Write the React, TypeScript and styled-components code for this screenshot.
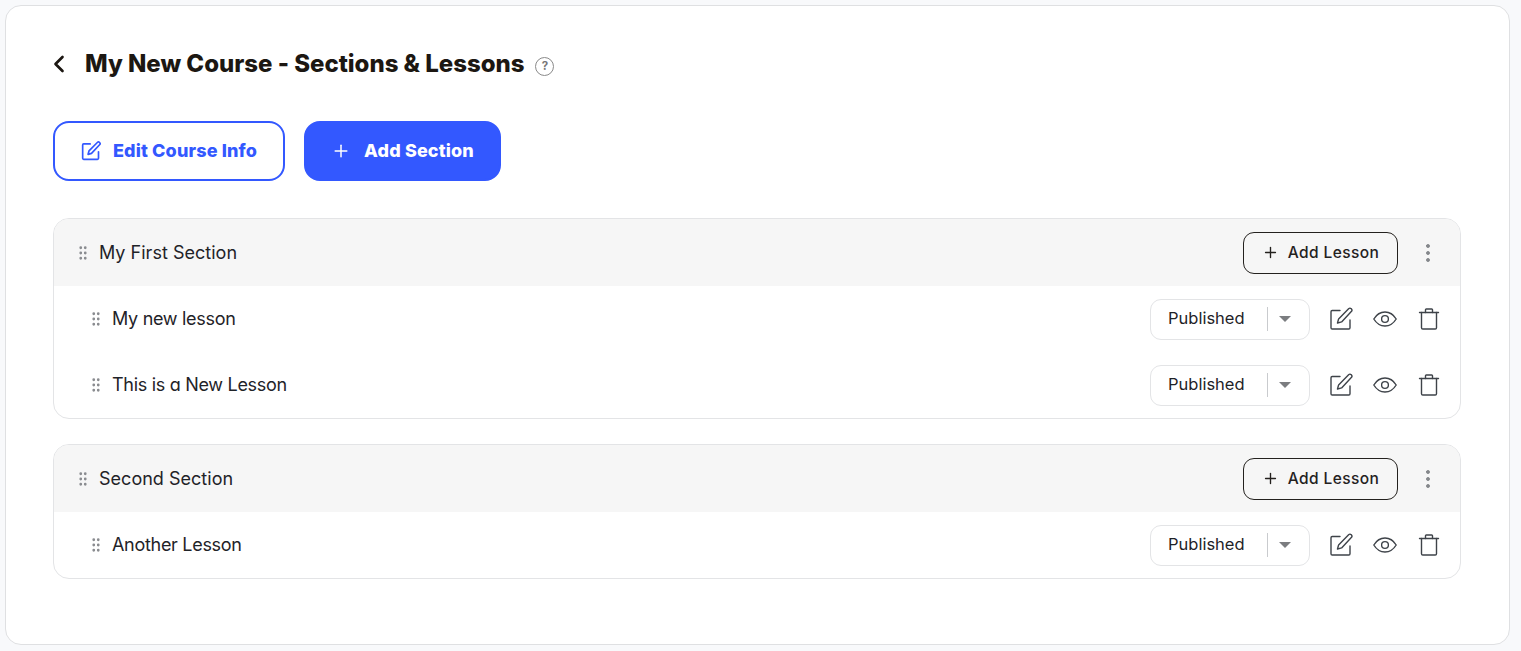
import styled, { createGlobalStyle } from "styled-components";
import { ChevronLeft, Plus, GripVertical } from "lucide-react";

const GlobalStyle = createGlobalStyle`
  html, body { margin: 0; padding: 0; background: #f8f9fb; }
  body {
    font-family: Inter, "Noto Sans", sans-serif;
    font-feature-settings: "cv11";
    color: #1f2328;
  }
`;

const Page = styled.div`
  padding: 5px 11px 6px 5px;
  height: 651px;
  box-sizing: border-box;
`;
const Panel = styled.main`
  box-sizing: border-box;
  height: 640px;
  background: #fff;
  border: 1px solid #dfe0e2;
  border-radius: 16px;
  padding: 41px 48px 0 47px;
`;
const TitleRow = styled.header`
  display: flex;
  align-items: center;
  height: 34px;
  color: #1c1712;
`;
const BackIcon = styled(ChevronLeft)`
  width: 28px;
  height: 28px;
  margin-left: -8px;
  margin-right: 12px;
  stroke-width: 2.3;
`;
const Title = styled.h1`
  margin: 0;
  font-size: 24px;
  line-height: 34px;
  font-weight: 800;
  letter-spacing: -0.02px;
`;
const Help = styled.span`
  box-sizing: border-box;
  width: 19px;
  height: 19px;
  margin: 4px 0 0 11px;
  border: 1px solid #8a8a8a;
  border-radius: 50%;
  font-size: 11.5px;
  font-weight: 700;
  color: #777;
  display: flex;
  align-items: center;
  justify-content: center;
`;
const Actions = styled.div`
  display: flex;
  gap: 19px;
  margin-top: 40px;
`;
const MainButton = styled.button<{ $filled?: boolean; $width: number }>`
  box-sizing: border-box;
  width: ${(p) => p.$width}px;
  height: 60px;
  display: flex;
  align-items: center;
  justify-content: center;
  gap: ${(p) => (p.$filled ? 13 : 12)}px;
  border: 2px solid #3358ff;
  border-radius: 16px;
  background: ${(p) => (p.$filled ? "#3358ff" : "#fff")};
  color: ${(p) => (p.$filled ? "#fff" : "#3358ff")};
  font: 800 18px Inter, sans-serif;
  font-feature-settings: "cv11";
  letter-spacing: 0.15px;
  padding: 0 0 2px;
`;
const Section = styled.section`
  margin-top: 25px;
  border: 1px solid #e3e4e6;
  border-radius: 16px;
  overflow: hidden;
  &:first-of-type { margin-top: 37px; }
`;
const SectionHead = styled.div`
  height: 67px;
  background: #f6f6f6;
  display: flex;
  align-items: center;
  padding: 0 22px 0 20px;
`;
const Grip = styled(GripVertical)`
  width: 18px;
  height: 18px;
  color: #8a8c90;
  stroke-width: 1.7;
  flex: none;
`;
const SectionName = styled.span`
  margin-left: 7px;
  font-size: 18px;
  letter-spacing: 0.02px;
`;
const AddLesson = styled.button`
  box-sizing: border-box;
  margin-left: auto;
  width: 155px;
  height: 42px;
  display: flex;
  align-items: center;
  justify-content: center;
  gap: 9px;
  background: transparent;
  border: 1px solid #24211e;
  border-radius: 11px;
  color: #24211e;
  font: 500 15.5px Inter, sans-serif;
  font-feature-settings: "cv11";
  letter-spacing: 0.42px;
  padding: 0;
`;
const MoreIcon = styled.svg`
  width: 20px;
  height: 20px;
  margin-left: 20px;
  fill: none;
  stroke: #4a4e54;
  stroke-width: 1.1;
  flex: none;
`;
const LessonRow = styled.div`
  height: 66px;
  display: flex;
  align-items: center;
  padding: 0 19px 0 33px;
`;
const LessonName = styled.span`
  margin: 0 0 1px 7px;
  font-size: 18px;
  letter-spacing: -0.3px;
`;
const Status = styled.div`
  box-sizing: border-box;
  margin-left: auto;
  width: 160px;
  height: 41px;
  border: 1px solid #e3e4e6;
  border-radius: 11px;
  display: flex;
  align-items: center;
  padding-left: 17px;
  font-size: 16.5px;
`;
const StatusText = styled.span`
  width: 99px;
  margin-bottom: 2px;
`;
const StatusDivider = styled.span`
  width: 1px;
  height: 24px;
  background: #c9cbce;
`;
const Caret = styled.span`
  margin-left: 11px;
  width: 0;
  height: 0;
  border-left: 6px solid transparent;
  border-right: 6px solid transparent;
  border-top: 6px solid #7b7d80;
`;
const Tools = styled.div`
  display: flex;
  align-items: center;
  gap: 20px;
  margin-left: 19px;
  color: #3e4349;
`;
const ToolIcon = styled.svg`
  width: 24px;
  height: 24px;
  fill: none;
  stroke: currentColor;
  stroke-width: 1.4;
  stroke-linecap: round;
  stroke-linejoin: round;
  flex: none;
`;

function TrashIcon() {
  return (
    <ToolIcon viewBox="0 0 24 24">
      <path d="M2.5 5.5h19" />
      <path d="M8.5 5.5V2.8a.8.8 0 0 1 .8-.8h5.4a.8.8 0 0 1 .8.8v2.7" />
      <path d="M4.5 5.5v15.2a1.3 1.3 0 0 0 1.3 1.3h12.4a1.3 1.3 0 0 0 1.3-1.3V5.5" />
    </ToolIcon>
  );
}

function EditIcon({ className }: { className?: string }) {
  return (
    <ToolIcon viewBox="0 0 24 24" className={className}>
      <path d="M11 3.5H3.2A1.2 1.2 0 0 0 2 4.7v16.1A1.2 1.2 0 0 0 3.2 22h16.6a1.2 1.2 0 0 0 1.2-1.2V13" />
      <path d="M19.6 1.8a1.9 1.9 0 0 1 2.7 2.7L12.6 14.9 8.5 16l1.1-4.1z" />
    </ToolIcon>
  );
}

const ButtonEdit = styled(EditIcon)`
  width: 20px;
  height: 20px;
  stroke-width: 2;
  margin-top: 2px;
`;

function EyeIcon() {
  return (
    <ToolIcon viewBox="0 0 24 24">
      <path d="M0.8 12C3.5 7.6 7.4 5 12 5s8.5 2.6 11.2 7c-2.7 4.4-6.6 7-11.2 7S3.5 16.4.8 12z" />
      <circle cx="12" cy="12" r="3.4" />
    </ToolIcon>
  );
}

const ButtonPlus = styled(Plus)`
  margin-top: 2px;
`;

function Lesson({ name }: { name: string }) {
  return (
    <LessonRow>
      <Grip />
      <LessonName>{name}</LessonName>
      <Status>
        <StatusText>Published</StatusText>
        <StatusDivider />
        <Caret />
      </Status>
      <Tools>
        <EditIcon />
        <EyeIcon />
        <TrashIcon />
      </Tools>
    </LessonRow>
  );
}

const sections = [
  { name: "My First Section", lessons: ["My new lesson", "This is a New Lesson"] },
  { name: "Second Section", lessons: ["Another Lesson"] },
];

export default function App() {
  return (
    <Page>
      <GlobalStyle />
      <Panel>
        <TitleRow>
          <BackIcon />
          <Title>My New Course - Sections &amp; Lessons</Title>
          <Help>?</Help>
        </TitleRow>
        <Actions>
          <MainButton $width={232}>
            <ButtonEdit />
            Edit Course Info
          </MainButton>
          <MainButton $filled $width={197}>
            <ButtonPlus size={20} strokeWidth={1.8} />
            Add Section
          </MainButton>
        </Actions>
        {sections.map((s) => (
          <Section key={s.name}>
            <SectionHead>
              <Grip />
              <SectionName>{s.name}</SectionName>
              <AddLesson>
                <Plus size={17} strokeWidth={1.9} />
                Add Lesson
              </AddLesson>
              <MoreIcon viewBox="0 0 20 20">
                <circle cx="10" cy="3" r="1.2" />
                <circle cx="10" cy="10" r="1.2" />
                <circle cx="10" cy="17" r="1.2" />
              </MoreIcon>
            </SectionHead>
            {s.lessons.map((l) => (
              <Lesson key={l} name={l} />
            ))}
          </Section>
        ))}
      </Panel>
    </Page>
  );
}
